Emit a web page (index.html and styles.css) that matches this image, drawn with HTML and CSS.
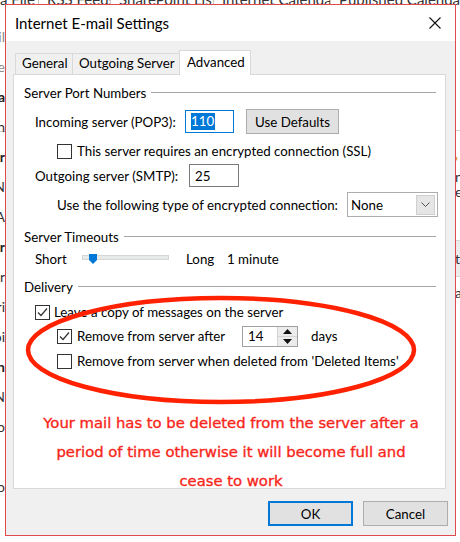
FILE: index.html
```html
<!DOCTYPE html>
<html>
<head>
<meta charset="utf-8">
<title>Internet E-mail Settings</title>
<link rel="stylesheet" href="styles.css">
</head>
<body>
<div class="screen">
  <div class="backdrop">
    <div class="ribbon">
      <span class="rtab rt1">a File</span>
      <span class="rtab rt2">RSS Feeds</span>
      <span class="rtab rt3">SharePoint Lists</span>
      <span class="rtab rt4">Internet Calendars</span>
      <span class="rtab rt5">Published Calendars</span>
    </div>
    <div class="sides">
      <div class="side left">
        <div class="ln dim">Fil</div>
        <div class="ln dim">e</div>
        <div class="ln b">Data</div>
        <div class="ln">In</div>
        <div class="ln b">Per</div>
        <div class="ln">N</div>
        <div class="ln">A</div>
        <div class="ln b">Sur</div>
        <div class="ln">Mar</div>
        <div class="ln">Pri</div>
        <div class="ln">Poi</div>
        <div class="ln b">Con</div>
        <div class="ln">N</div>
        <div class="ln">Pro</div>
        <div class="ln">&nbsp;</div>
        <div class="ln">Po</div>
      </div>
      <div class="side right">
        <div class="rl orange">'</div>
        <div class="rl">n</div>
        <div class="rl">e</div>
        <div class="rbox">t</div>
        <div class="rl">a</div>
      </div>
    </div>
  </div>

  <div class="dialog">
    <div class="titlebar">
      <span class="title">Internet E-mail Settings</span>
      <svg class="close" width="12" height="12" viewBox="0 0 12 12"><path d="M0.5 0.5 L11.5 11.5 M11.5 0.5 L0.5 11.5" stroke="#111" stroke-width="1.1" fill="none"/></svg>
    </div>
    <div class="tabs">
      <div class="tab t-gen">General</div>
      <div class="tab t-out">Outgoing Server</div>
      <div class="tab t-adv active">Advanced</div>
    </div>
    <div class="panel">
      <div class="grp g1">Server Port Numbers</div>

      <div class="row r-in">
        <span class="lbl lbl-in">Incoming server (POP3):</span>
        <span class="txt txt-in"><span class="hl">110</span></span>
        <span class="btn btn-def">Use Defaults</span>
      </div>

      <div class="row r-ssl">
        <span class="cb"></span>
        <span class="lbl">This server requires an encrypted connection (SSL)</span>
      </div>

      <div class="row r-out">
        <span class="lbl lbl-out">Outgoing server (SMTP):</span>
        <span class="txt txt-out">25</span>
      </div>

      <div class="row r-enc">
        <span class="lbl lbl-enc">Use the following type of encrypted connection:</span>
        <span class="select">
          <span class="sel-val">None</span>
          <span class="sel-btn"><svg width="9" height="5" viewBox="0 0 9 5"><polyline points="0.5,0.5 4.5,4.5 8.5,0.5" fill="none" stroke="#555" stroke-width="1"/></svg></span>
        </span>
      </div>

      <div class="grp g2">Server Timeouts</div>

      <div class="row r-slide">
        <span class="lbl lbl-short">Short</span>
        <span class="track"><svg class="thumb" width="8" height="10" viewBox="0 0 8 10"><polygon points="0,0 8,0 8,6 4,10 0,6" fill="#0078d7"/></svg></span>
        <span class="lbl lbl-long">Long</span>
        <span class="lbl">1 minute</span>
      </div>

      <div class="grp g3">Delivery</div>

      <div class="row r-leave">
        <span class="cb checked"><svg width="13" height="13" viewBox="0 0 13 13"><polyline points="2,6.5 5,9.5 11,2.5" fill="none" stroke="#333" stroke-width="1.2"/></svg></span>
        <span class="lbl">Leave a copy of messages on the server</span>
      </div>

      <div class="row r-rem">
        <span class="cb checked"><svg width="13" height="13" viewBox="0 0 13 13"><polyline points="2,6.5 5,9.5 11,2.5" fill="none" stroke="#333" stroke-width="1.2"/></svg></span>
        <span class="lbl lbl-rem">Remove from server after</span>
        <span class="spin">
          <span class="spin-val">14</span>
          <span class="spin-btns">
            <span class="spin-up"><svg width="9" height="5" viewBox="0 0 9 5"><polygon points="0,5 4.5,0 9,5" fill="#111"/></svg></span>
            <span class="spin-dn"><svg width="9" height="5" viewBox="0 0 9 5"><polygon points="0,0 9,0 4.5,5" fill="#111"/></svg></span>
          </span>
        </span>
        <span class="lbl">days</span>
      </div>

      <div class="row r-del">
        <span class="cb"></span>
        <span class="lbl">Remove from server when deleted from 'Deleted Items'</span>
      </div>

      <div class="note">
        <div>Your mail has to be deleted from the server after a</div>
        <div>period of time otherwise it will become full and</div>
        <div>cease to work</div>
      </div>
    </div>
    <div class="footer">
      <span class="btn btn-ok">OK</span>
      <span class="btn btn-cancel">Cancel</span>
    </div>
  </div>

  <svg class="ring" width="392" height="110" viewBox="0 0 392 110">
    <ellipse cx="196" cy="55" rx="193" ry="52" fill="none" stroke="#ff2100" stroke-width="4.5"/>
  </svg>
</div>
</body>
</html>
```

FILE: styles.css
```css
body {
  margin: 0;
  background: #fff;
  font-family: "Lato", "Open Sans", sans-serif;
}

.screen {
  position: relative;
  width: 460px;
  height: 542px;
  overflow: hidden;
  background: #fff;
  color: #000;
}

/* ---------- backdrop (Outlook behind the dialog) ---------- */
.ribbon {
  display: flex;
  align-items: flex-end;
  height: 6px;
  overflow: hidden;
  font-size: 15px;
  color: #333;
}
.rtab {
  flex: none;
  box-sizing: border-box;
  white-space: nowrap;
  line-height: 14px;
  height: 14px;
  border-right: 1px solid #c8c8c8;
  padding-left: 8px;
  overflow: hidden;
}
.rt1 { width: 39px; padding-left: 0; }
.rt2 { width: 72px; }
.rt3 { width: 103px; }
.rt4 { width: 117px; }
.rt5 { width: 150px; }

.sides {
  display: flex;
  justify-content: space-between;
  height: 536px;
}
.side {
  width: 5px;
  overflow: hidden;
  display: flex;
  flex-direction: column;
  font-size: 14px;
  color: #333;
  white-space: nowrap;
}
.side.left {
  align-items: flex-end;
  padding-top: 16px;
  background: linear-gradient(#cfcfcf, #cfcfcf) 0 125px / 100% 1px no-repeat;
}
.ln { line-height: 30px; height: 30px; }
.ln.dim { color: #8a8a8a; }
.ln.b { font-weight: 700; color: #222; }

.side.right {
  align-items: flex-start;
  padding-top: 148px;
  background: linear-gradient(#cfcfcf, #cfcfcf) 0 124px / 100% 1px no-repeat;
}
.rl { line-height: 15px; height: 15px; }
.rl.orange { color: #e39a2a; font-weight: 700; }
.rbox {
  margin-top: 41px;
  height: 35px;
  width: 20px;
  line-height: 35px;
  background: #ececec;
  border-top: 1px solid #d6d6d6;
  border-bottom: 1px solid #d6d6d6;
  margin-bottom: 8px;
}

/* ---------- dialog ---------- */
.dialog {
  position: absolute;
  left: 5px;
  top: 4px;
  width: 451px;
  height: 532px;
  box-sizing: border-box;
  border: 1px solid #e04a4c;
  background: #f0f0f0;
  display: flex;
  flex-direction: column;
}

.titlebar {
  flex: none;
  height: 36px;
  background: #fff;
  display: flex;
  align-items: center;
  justify-content: space-between;
  padding: 0 14px 0 9px;
}
.title {
  font-size: 15px;
  color: #000;
}
.close { display: block; }

.tabs {
  flex: none;
  display: flex;
  align-items: flex-end;
  height: 24px;
  margin-top: 9px;
  padding-left: 9px;
  position: relative;
  z-index: 1;
}
.tab {
  box-sizing: border-box;
  height: 21px;
  border: 1px solid #d9d9d9;
  border-bottom: none;
  background: #f0f0f0;
  font-size: 13.3px;
  line-height: 19px;
  padding-left: 6px;
  white-space: nowrap;
}
.t-gen { width: 58px; }
.t-out { width: 108px; margin-left: -1px; }
.t-adv { width: 72px; margin-left: -1px; }
.tab.active {
  height: 25px;
  margin-bottom: -1px;
  background: #fff;
  line-height: 22px;
  padding-left: 7px;
}

.panel {
  flex: none;
  margin-left: 7px;
  width: 433px;
  height: 415px;
  box-sizing: border-box;
  border: 1px solid #d9d9d9;
  background: #fff;
  padding: 8px 9px 0 10px;
  font-size: 13.3px;
}

.grp {
  display: flex;
  align-items: center;
  height: 20px;
  white-space: nowrap;
}
.grp::after {
  content: "";
  flex: 1;
  height: 1px;
  background: #a6a6a6;
  margin-left: 5px;
  margin-top: -2px;
}
.g2 { margin-top: 10px; }
.g3 { margin-top: 8px; }

.row {
  display: flex;
  align-items: center;
  white-space: nowrap;
}
.lbl { flex: none; }

.r-in { margin-top: 5px; height: 27px; padding-left: 11px; }
.lbl-in { width: 150px; }
.txt {
  flex: none;
  box-sizing: border-box;
  height: 23px;
  border: 1px solid #7a7a7a;
  background: #fff;
  display: flex;
  align-items: center;
  padding-left: 5px;
}
.txt-in { width: 49px; border-color: #0078d7; }
.hl {
  background: #0078d7;
  color: #fff;
  line-height: 17px;
  padding: 0 1px 0 0;
}
.btn {
  flex: none;
  box-sizing: border-box;
  height: 25px;
  border: 1px solid #adadad;
  background: #e1e1e1;
  display: flex;
  align-items: center;
  justify-content: center;
  font-size: 13.3px;
}
.btn-def { width: 93px; margin-left: 12px; }

.r-ssl { margin-top: 6px; height: 20px; padding-left: 33px; }
.cb {
  flex: none;
  box-sizing: border-box;
  width: 15px;
  height: 15px;
  border: 1px solid #333;
  background: #fff;
  margin-right: 5px;
  display: flex;
  align-items: center;
  justify-content: center;
}
.cb svg { display: block; }

.r-out { margin-top: 2px; height: 25px; padding-left: 11px; }
.lbl-out { width: 154px; }
.txt-out { width: 50px; }

.r-enc { margin-top: 4px; height: 25px; padding-left: 33px; }
.lbl-enc { width: 290px; }
.select {
  flex: none;
  box-sizing: border-box;
  width: 91px;
  height: 25px;
  border: 1px solid #adadad;
  background: #fff;
  display: flex;
  align-items: center;
  justify-content: space-between;
  padding: 0 2px 0 3px;
}
.sel-btn {
  box-sizing: border-box;
  width: 19px;
  height: 20px;
  background: #e5e5e5;
  border: 1px solid #cfcfcf;
  display: flex;
  align-items: center;
  justify-content: center;
}
.sel-btn svg { display: block; }

.r-slide { margin-top: 2px; height: 20px; padding-left: 11px; }
.lbl-short { width: 47px; }
.track {
  flex: none;
  position: relative;
  align-self: flex-start;
  margin-top: 6px;
  box-sizing: border-box;
  width: 87px;
  height: 5px;
  background: #e7eaea;
  border: 1px solid #d6d6d6;
  margin-right: 17px;
}
.thumb {
  position: absolute;
  left: 6px;
  top: -2px;
  display: block;
}
.lbl-long { width: 41px; }

.r-leave { margin-top: 5px; height: 20px; padding-left: 11px; }
.r-leave .cb { margin-right: 4px; }

.r-rem { margin-top: 4px; height: 20px; padding-left: 33px; }
.lbl-rem { width: 165px; }
.spin {
  flex: none;
  box-sizing: border-box;
  width: 56px;
  height: 21px;
  border: 1px solid #a0a0a0;
  background: #fff;
  display: flex;
  align-items: stretch;
  margin-right: 13px;
}
.spin-val {
  padding-left: 5px;
  display: flex;
  align-items: center;
}
.spin-btns {
  margin-left: auto;
  width: 19px;
  display: flex;
  flex-direction: column;
  border-left: 1px solid #d4d4d4;
  background: #ececec;
}
.spin-up, .spin-dn {
  flex: 1;
  display: flex;
  align-items: center;
  justify-content: center;
}
.spin-up { border-bottom: 1px solid #d4d4d4; }
.spin-btns svg { display: block; }

.r-del { margin-top: 5px; height: 20px; padding-left: 33px; }

.note {
  margin-top: 37px;
  padding-left: 2px;
  text-align: center;
  color: #f8261a;
  font-family: "DejaVu Sans", "Verdana", sans-serif;
  font-size: 14.8px;
  -webkit-text-stroke: 0.35px #f8261a;
  line-height: 29px;
  white-space: nowrap;
}

.footer {
  flex: none;
  display: flex;
  justify-content: flex-end;
  gap: 10px;
  padding: 12px 7px 0 0;
}
.btn-ok {
  width: 85px;
  border: 2px solid #0078d7;
}
.btn-cancel { width: 85px; }

.ring {
  position: absolute;
  left: 25px;
  top: 295px;
  display: block;
}
```
